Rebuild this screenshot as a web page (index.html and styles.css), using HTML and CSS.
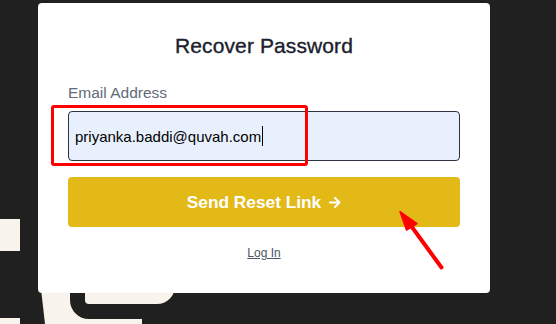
FILE: index.html
```html
<!DOCTYPE html>
<html lang="en">
<head>
<meta charset="utf-8">
<title>Recover Password</title>
<link rel="stylesheet" href="styles.css">
</head>
<body>
<svg class="backdrop" width="556" height="324" viewBox="0 0 556 324" aria-hidden="true">
  <rect x="0" y="219" width="20" height="32" fill="#f8f4ec"/>
  <rect x="0" y="318" width="20" height="6" fill="#f8f4ec"/>
  <path d="M40 280 L142 280 L142 324 L45 324 Z" fill="#f8f4ec"/>
  <path d="M85 280 H175 V286 A18 18 0 0 1 157 304 H85 Z" fill="#f8f4ec"/>
  <path d="M77.5 270 V300 A11.5 11.5 0 0 0 89 311.5 H560" fill="none" stroke="#202020" stroke-width="15"/>
</svg>

<main class="card">
  <h1 class="title">Recover Password</h1>
  <label class="label">Email Address</label>
  <div class="field"><span class="value">priyanka.baddi@quvah.com</span><span class="caret"></span></div>
  <button class="submit" type="button">
    <span>Send Reset Link</span>
    <svg class="arrow-icon" width="12" height="11" viewBox="0 0 12 11" aria-hidden="true">
      <path d="M0.5 5.5 H10.5 M6 1 L10.5 5.5 L6 10" fill="none" stroke="#ffffff" stroke-width="2" stroke-linecap="round" stroke-linejoin="round"/>
    </svg>
  </button>
  <a class="login" href="#">Log In</a>
</main>

<div class="highlight"></div>
<svg class="pointer" width="556" height="324" viewBox="0 0 556 324" aria-hidden="true">
  <line x1="441.5" y1="267.5" x2="409" y2="223" stroke="#ff0000" stroke-width="4" stroke-linecap="round"/>
  <path d="M400 211.5 L406.5 230 L417 223.5 Z" fill="#ff0000" stroke="#ff0000" stroke-width="1.5" stroke-linejoin="round"/>
</svg>
</body>
</html>
```

FILE: styles.css
```css
html, body {
  margin: 0;
  padding: 0;
}

body {
  width: 556px;
  height: 324px;
  overflow: hidden;
  background: #202020;
  font-family: "Liberation Sans", Arial, sans-serif;
  position: relative;
}

.backdrop {
  position: absolute;
  left: 0;
  top: 0;
  z-index: 0;
}

.card {
  position: relative;
  z-index: 1;
  box-sizing: border-box;
  width: 452px;
  height: 290px;
  margin: 3px 0 0 38px;
  padding: 31px 30px 0 30px;
  background: #ffffff;
  border-radius: 4px;
  display: flex;
  flex-direction: column;
}

.title {
  margin: 0;
  font-size: 21px;
  line-height: 24px;
  font-weight: normal;
  color: #1a202c;
  text-align: center;
  letter-spacing: 0.1px;
  -webkit-text-stroke: 0.35px #1a202c;
}

.label {
  margin-top: 25px;
  font-size: 15.5px;
  line-height: 20px;
  color: #626b78;
}

.field {
  margin-top: 8px;
  box-sizing: border-box;
  height: 50px;
  border: 1px solid #2d3340;
  border-radius: 4px;
  background: #e8f0fe;
  display: flex;
  align-items: center;
  padding-left: 6px;
  font-size: 15px;
  color: #000000;
}

.caret {
  display: inline-block;
  width: 1px;
  height: 20px;
  background: #000000;
  margin-left: 1px;
}

.submit {
  margin-top: 16px;
  height: 50px;
  border: none;
  border-radius: 4px;
  background: #e2b916;
  color: #ffffff;
  font-family: "Liberation Sans", Arial, sans-serif;
  font-size: 17.3px;
  font-weight: bold;
  display: flex;
  align-items: center;
  justify-content: center;
  gap: 8px;
  padding: 0;
}

.arrow-icon {
  display: block;
}

.login {
  margin-top: 18px;
  align-self: center;
  font-size: 12px;
  line-height: 16px;
  color: #4b5563;
  text-decoration: underline;
}

.highlight {
  position: absolute;
  z-index: 2;
  left: 51px;
  top: 105px;
  width: 251px;
  height: 55px;
  border: 3px solid #ff0000;
  border-radius: 3px;
}

.pointer {
  position: absolute;
  left: 0;
  top: 0;
  z-index: 2;
}
```
